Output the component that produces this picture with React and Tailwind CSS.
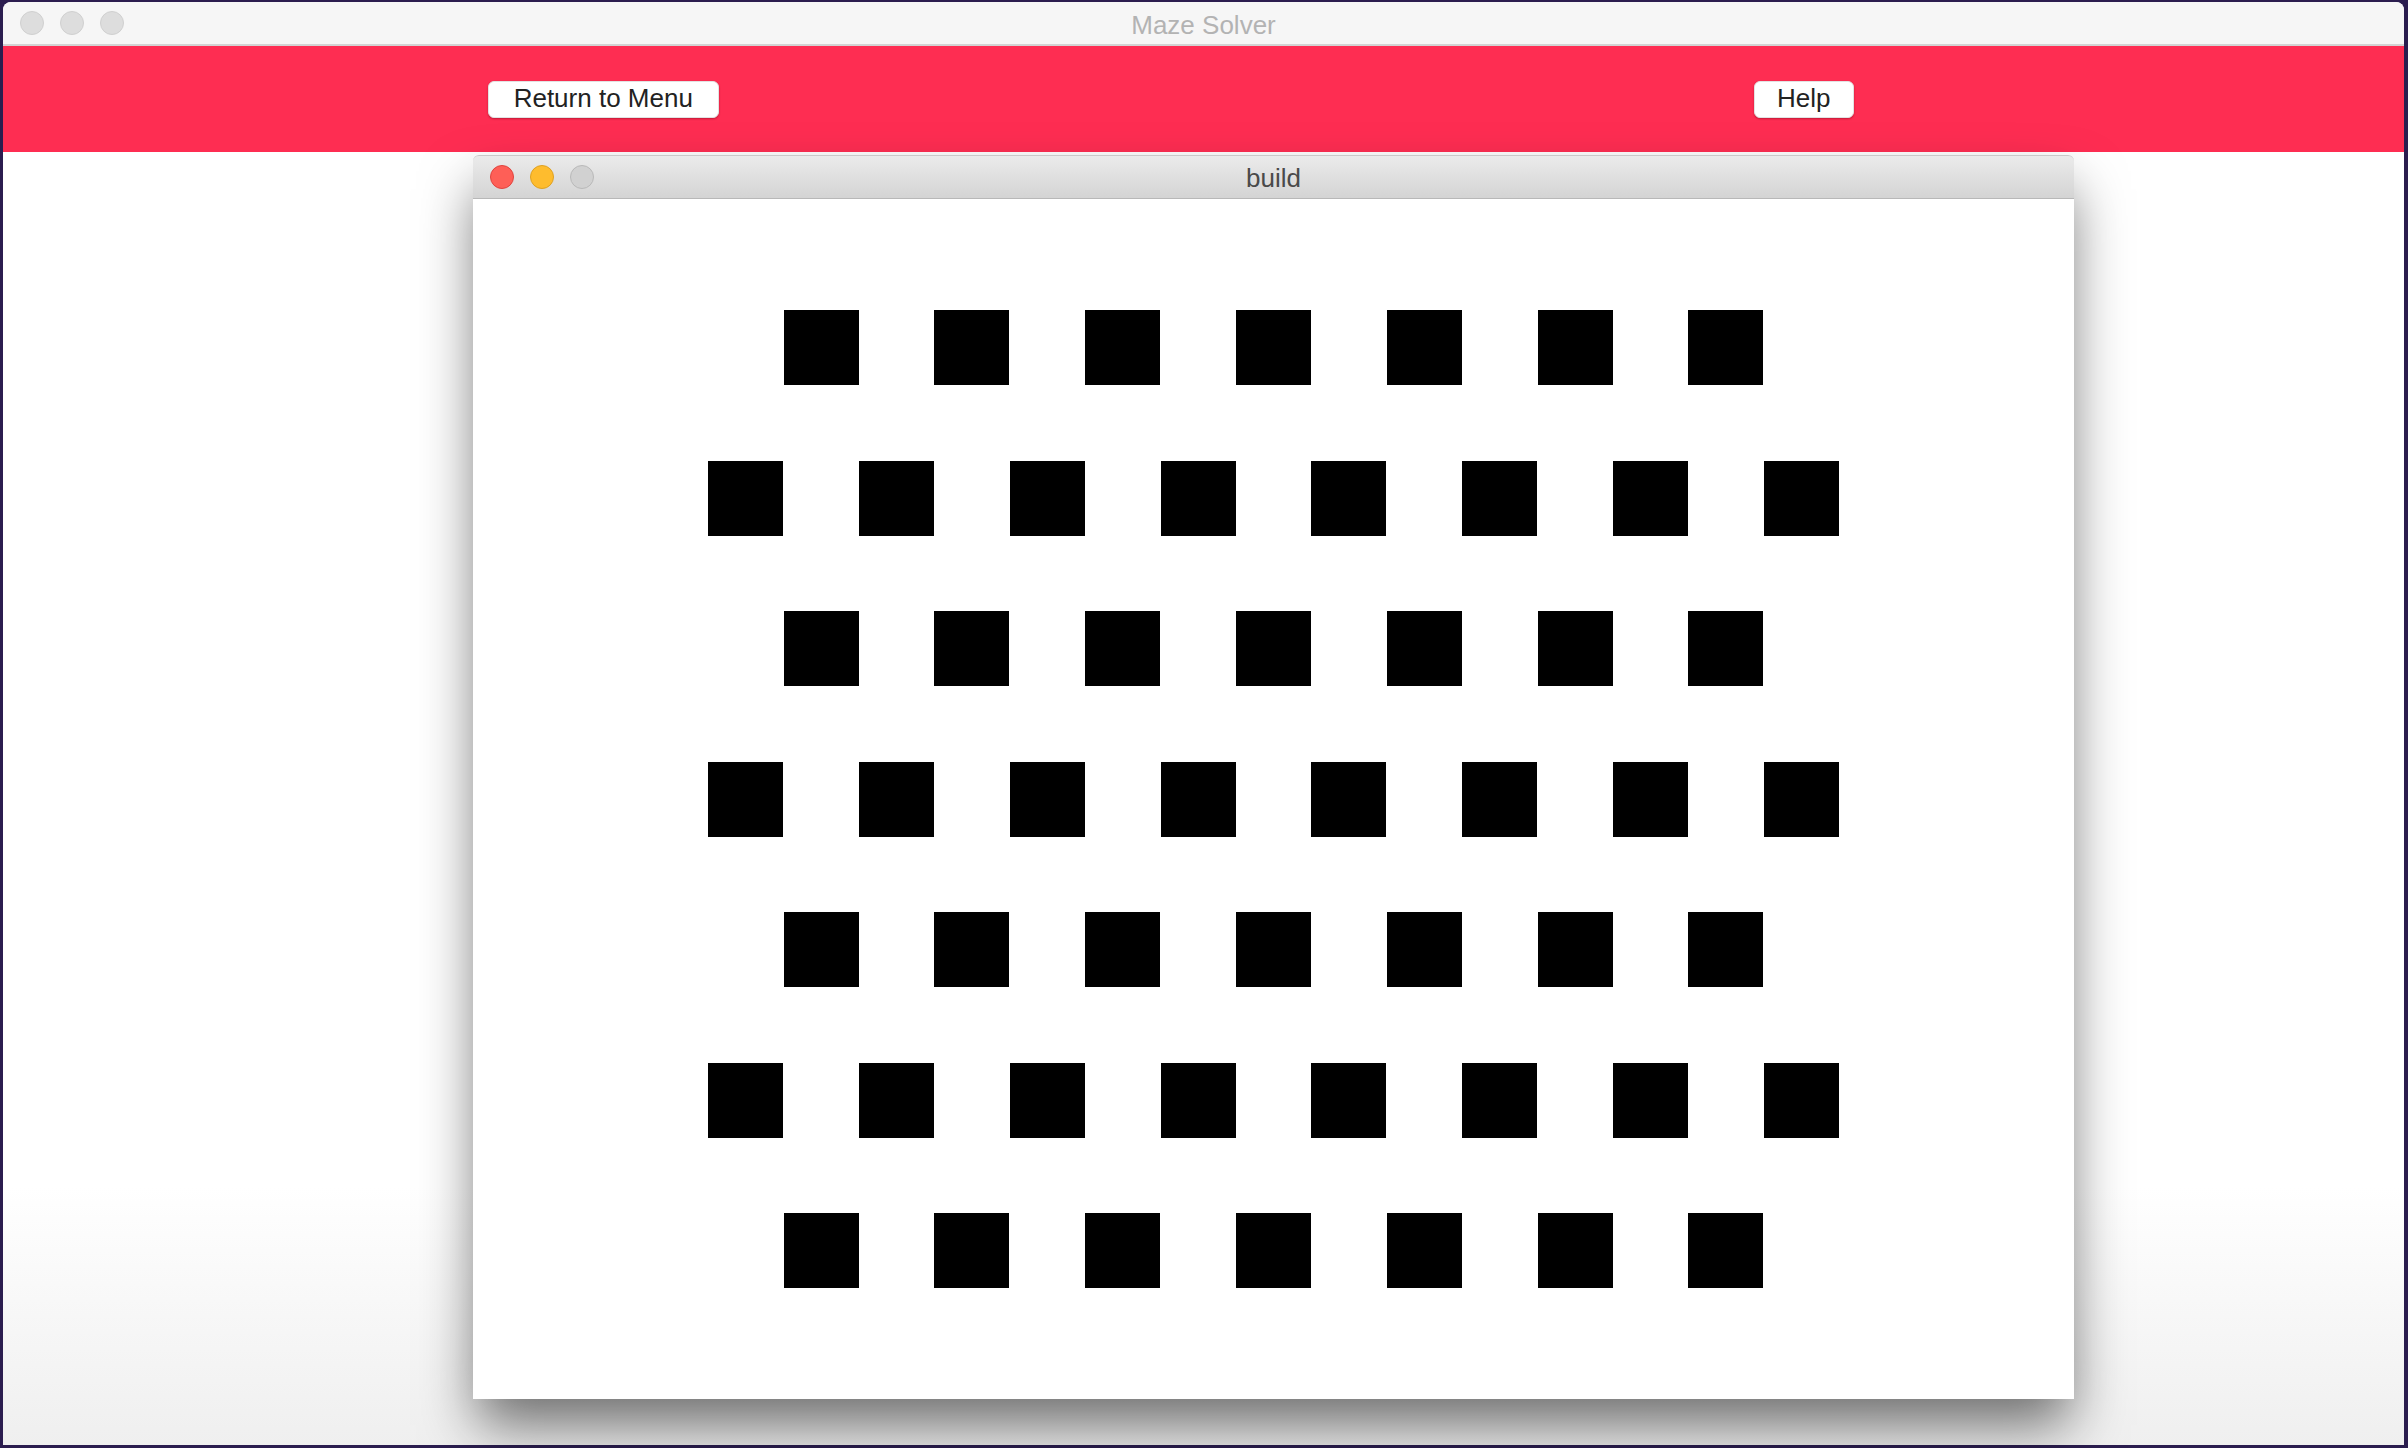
import React from 'react';

const FONT = { fontFamily: '"Helvetica Neue", "Liberation Sans", Arial, sans-serif' };

const Lights = ({ active }) => {
  const colors = active
    ? ['bg-[#fe5f57] border-[#e0443e]', 'bg-[#febc2e] border-[#dea123]', 'bg-[#d1d1d1] border-[#b9b9b9]']
    : ['bg-[#dddddd] border-[#d0d0d0]', 'bg-[#dddddd] border-[#d0d0d0]', 'bg-[#dddddd] border-[#d0d0d0]'];
  return (
    <div className="absolute left-[17px] top-0 h-full flex items-center gap-[16px]">
      {colors.map((c, i) => (
        <div key={i} className={`w-[24px] h-[24px] rounded-full border ${c}`}></div>
      ))}
    </div>
  );
};

const Square = () => <div className="w-[75px] h-[75px] bg-black shrink-0"></div>;

const App = () => {
  // 7 rows, alternating 7 and 8 squares
  const rows = [7, 8, 7, 8, 7, 8, 7];

  return (
    <div className="w-[2408px] h-[1448px] relative overflow-hidden bg-[#2b1d4f]" style={FONT}>
      {/* Main window */}
      <div className="absolute left-[3px] top-[2px] w-[2401px] h-[1443px] rounded-t-[8px] overflow-hidden bg-white flex flex-col">
        <div className="relative h-[44px] shrink-0 bg-[#f6f6f6] border-b-2 border-[#d3d3d3] flex items-center justify-center">
          <Lights active={false} />
          <span className="text-[26px] text-[#b3b3b3] leading-none pt-[3px]">Maze Solver</span>
        </div>
        <div className="h-[106px] shrink-0 bg-[#fe2d52] grid grid-cols-2 items-center">
          <div className="flex justify-center">
            <button className="h-[37px] w-[231px] bg-white rounded-[6px] border border-[#e2e2e2] shadow-[0_1px_2px_rgba(120,0,20,0.45)] text-[26px] text-[#222] leading-none pb-[2px]">
              Return to Menu
            </button>
          </div>
          <div className="flex justify-center">
            <button className="h-[37px] w-[100px] bg-white rounded-[6px] border border-[#e2e2e2] shadow-[0_1px_2px_rgba(120,0,20,0.45)] text-[26px] text-[#222] leading-none pb-[2px]">
              Help
            </button>
          </div>
        </div>
        <div className="flex-1 bg-gradient-to-b from-white from-80% to-[#efefef]"></div>
      </div>

      {/* build window */}
      <div className="absolute left-[473px] top-[155px] w-[1601px] h-[1244px] flex flex-col bg-white rounded-t-[6px] shadow-[0_30px_55px_-4px_rgba(0,0,0,0.55)]">
        <div className="relative h-[44px] shrink-0 rounded-t-[6px] bg-gradient-to-b from-[#ebebeb] to-[#d4d4d4] border-t border-[#c9c9c9] border-b border-b-[#b8b8b8] flex items-center justify-center">
          <Lights active />
          <span className="text-[26px] text-[#4a4a4a] leading-none pt-[2px]">build</span>
        </div>
        <div className="flex-1 flex flex-col items-center justify-center gap-y-[75.5px]">
          {rows.map((n, r) => (
            <div key={r} className="flex gap-x-[75.8px]">
              {[...Array(n)].map((_, i) => (
                <Square key={i} />
              ))}
            </div>
          ))}
        </div>
      </div>
    </div>
  );
};

export default App;
